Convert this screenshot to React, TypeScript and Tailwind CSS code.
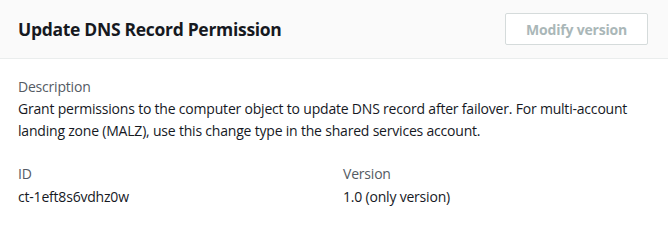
export default function App() {
  return (
    <div className="h-[230px] w-[668px] bg-white font-['Open_Sans',sans-serif] text-[#16191f]">
      <div className="flex h-[59px] items-center justify-between border-b border-[#eaeded] bg-[#fafafa] pl-[18px] pr-[20px]">
        <h2 className="text-[17.5px] font-bold leading-[22px] tracking-[-0.3px]">Update DNS Record Permission</h2>
        <button className="h-[32px] w-[143px] rounded-[2px] border border-[#d5dbdb] bg-white text-[14px] font-bold tracking-[-0.2px] text-[#aab7b8]">
          Modify version
        </button>
      </div>
      <div className="px-[18px] pt-[17px] text-[14px] leading-[22px] tracking-[-0.2px]">
        <div className="text-[#545b64]">Description</div>
        <p>
          Grant permissions to the computer object to update DNS record after failover. For multi-account landing zone
          (MALZ), use this change type in the shared services account.
        </p>
        <div className="mt-[21px] grid grid-cols-2 gap-x-[18px]">
          <div>
            <div className="text-[#545b64]">ID</div>
            <div className="mt-px">ct-1eft8s6vdhz0w</div>
          </div>
          <div>
            <div className="text-[#545b64]">Version</div>
            <div className="mt-px">1.0 (only version)</div>
          </div>
        </div>
      </div>
    </div>
  )
}
